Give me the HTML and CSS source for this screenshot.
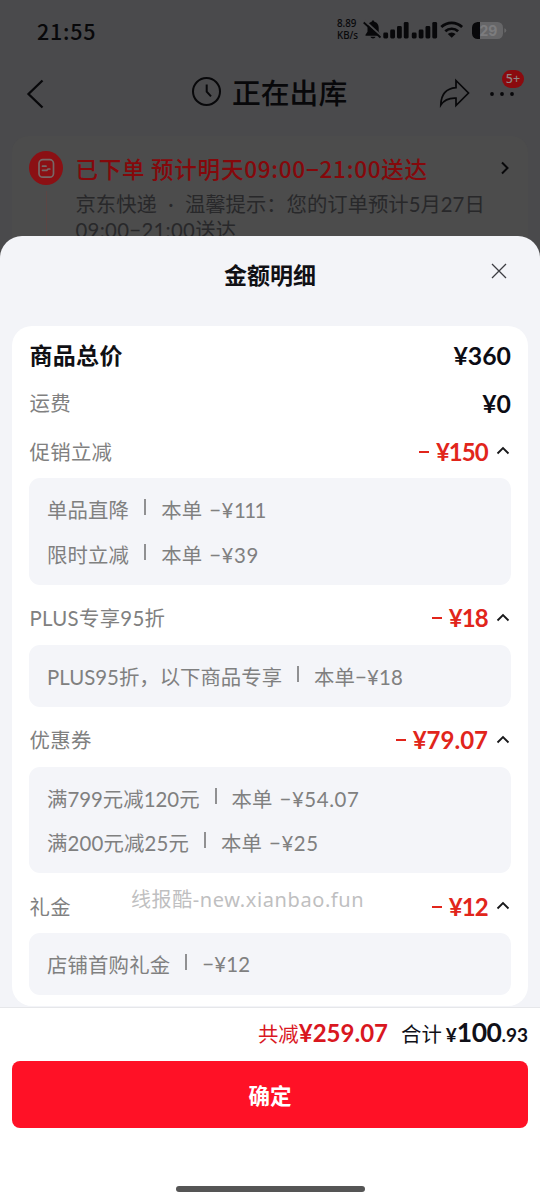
FILE: index.html
```html
<!DOCTYPE html>
<html lang="zh-CN">
<head>
<meta charset="utf-8">
<title>金额明细</title>
<link rel="stylesheet" href="styles.css">
</head>
<body>
<div class="page">
  <div class="backdrop">
    <div class="status">
      <span class="clock">21:55</span>
      <span class="speed"><span>8.89</span><span>KB/s</span></span>
      <svg class="status-icons" width="176" height="24" viewBox="0 0 176 24">
        <path d="M10 2.500c.9 0 1.300.5 1.300 1.200 3.100.8 4.400 3 4.400 6v4l2 3v1H2.500v-1l2-3v-4c0-3 1.400-5.200 4.200-6 0-.7.4-1.200 1.300-1.200zM7.500 18.700h5c-.6 2.300-4.400 2.300-5 0z"/>
        <path d="M1.500 2.500 19 18.500" stroke="#4a4a4c" stroke-width="2"/>
        <path d="M.7 4.500 17.500 19.500" stroke="#08080a" stroke-width="1.700"/>
        <g>
          <rect x="20.300" y="14.500" width="4.800" height="6" rx="1.400"/><rect x="27.200" y="11.500" width="4.800" height="9" rx="1.400"/><rect x="34" y="8" width="4.800" height="12.500" rx="1.400"/><rect x="40.800" y="4" width="4.800" height="16.500" rx="1.400"/>
          <rect x="48.800" y="14.500" width="4.800" height="6" rx="1.400"/><rect x="55.700" y="11.500" width="4.800" height="9" rx="1.400"/><rect x="62.500" y="8" width="4.800" height="12.500" rx="1.400"/><rect x="69.300" y="4" width="4.800" height="16.500" rx="1.400"/>
        </g>
        <g fill="none" stroke="#08080a" stroke-width="2.700"><path d="M78.300 9a15 15 0 0 1 20.800 0"/><path d="M82.300 13.300a9.300 9.300 0 0 1 12.800 0"/></g>
        <path d="M88.700 19.800 84.800 16a5.600 5.600 0 0 1 7.800 0z"/>
        <rect x="109" y="4" width="31" height="17" rx="5.500" fill="#666668"/>
        <path d="M117 4v17h-2.500a5.500 5.500 0 0 1-5.500-5.500v-6A5.500 5.500 0 0 1 114.500 4z"/>
        <path d="M141.300 10.300q2 .5 2 2.200t-2 2.200z" fill="#666668"/>
        <text class="battery" x="116.500" y="17.800">29</text>
      </svg>
    </div>
    <div class="nav">
      <svg class="back" width="20" height="32" viewBox="0 0 20 32"><path d="M17.500 2.500 3.500 16l14 13.500"/></svg>
      <div class="nav-title">
        <svg width="30" height="30" viewBox="0 0 30 30"><circle cx="15.500" cy="14.500" r="13.500"/><path d="M15.700 7.500v7.200l4.300 4.700"/></svg>
        <span>正在出库</span>
      </div>
      <svg class="share" width="32" height="30" viewBox="0 0 32 30"><path d="M17 2.500 29.500 15 17 27.500v-7.400C9.500 19.700 5 22 1.800 27 2 16.700 7.500 10.500 17 9.700z"/></svg>
      <svg class="more" width="28" height="8" viewBox="0 0 28 8"><circle cx="4" cy="4" r="1.900"/><circle cx="14" cy="4" r="1.900"/><circle cx="24" cy="4" r="1.900"/></svg>
      <span class="badge">5+</span>
    </div>
    <div class="order">
      <div class="track">
        <svg width="34" height="34" viewBox="0 0 34 34"><circle cx="17" cy="17" r="17" fill="#8b1014"/><g fill="none" stroke="#776867" stroke-width="1.700" stroke-linecap="round"><rect x="10" y="8.700" width="14.500" height="17.500" rx="3.800"/><path d="M13.500 15.200h3.500M13.500 19.300h4.300l1.300-1.300h1.700"/></g></svg>
        <i class="track-line"></i>
      </div>
      <div class="order-text">
        <div class="order-title">已下单 预计明天09:00−21:00送达</div>
        <div class="order-note">京东快递<span class="dot">·</span>温馨提示：您的订单预计5月27日</div>
        <div class="order-note second">09:00−21:00送达</div>
      </div>
      <svg class="order-arrow" width="10" height="14" viewBox="0 0 10 14"><path d="M2 1.500 7.500 7 2 12.500"/></svg>
    </div>
  </div>

  <div class="sheet">
    <div class="sheet-head">
      <h1>金额明细</h1>
      <svg class="close" width="16" height="16" viewBox="0 0 16 16"><path d="M1 1l14 14M15 1 1 15"/></svg>
    </div>
    <div class="bill">
      <div class="row total"><span class="name">商品总价</span><span class="price">¥360</span></div>
      <div class="row"><span class="name">运费</span><span class="price">¥0</span></div>

      <div class="row group first"><span class="name">促销立减</span><span class="price cut"><i class="minus"></i><span class="narrow">¥150</span></span><svg class="up" width="14" height="9" viewBox="0 0 14 9"><path d="M1.500 7.500 7 2l5.500 5.500"/></svg></div>
      <div class="detail">
        <div class="line"><span>单品直降</span><i class="bar"></i><span>本单 <span class="sum">−¥</span><span class="ones">111</span></span></div>
        <div class="line"><span>限时立减</span><i class="bar"></i><span>本单 <span class="sum">−¥39</span></span></div>
      </div>

      <div class="row group"><span class="name">PLUS专享95折</span><span class="price cut"><i class="minus"></i><span class="narrow">¥18</span></span><svg class="up" width="14" height="9" viewBox="0 0 14 9"><path d="M1.500 7.500 7 2l5.500 5.500"/></svg></div>
      <div class="detail">
        <div class="line"><span class="tight">PLUS95折，以下商品专享</span><i class="bar"></i><span>本单−¥18</span></div>
      </div>

      <div class="row group"><span class="name">优惠券</span><span class="price cut"><i class="minus"></i>¥79.07</span><svg class="up" width="14" height="9" viewBox="0 0 14 9"><path d="M1.500 7.500 7 2l5.500 5.500"/></svg></div>
      <div class="detail">
        <div class="line"><span class="tight">满799元减120元</span><i class="bar"></i><span>本单 <span class="sum">−¥54.07</span></span></div>
        <div class="line"><span>满200元减25元</span><i class="bar"></i><span>本单 <span class="sum">−¥25</span></span></div>
      </div>

      <div class="row group"><span class="name">礼金</span><span class="price cut"><i class="minus"></i><span class="narrow">¥12</span></span><svg class="up" width="14" height="9" viewBox="0 0 14 9"><path d="M1.500 7.500 7 2l5.500 5.500"/></svg></div>
      <div class="detail">
        <div class="line"><span>店铺首购礼金</span><i class="bar"></i><span>−¥12</span></div>
      </div>
    </div>
  </div>

  <div class="footer">
    <div class="summary">
      <span class="saved">共减<b>¥259.07</b></span>
      <span class="payable">合计<b class="yen">¥</b><b class="whole">100</b><b class="cents">.93</b></span>
    </div>
    <button class="confirm">确定</button>
    <i class="home-bar"></i>
  </div>
  <div class="watermark">线报酷-new.xianbao.fun</div>
</div>
</body>
</html>
```
FILE: styles.css
```css
* { box-sizing: border-box; }
body {
  margin: 0;
  background: #4a4a4c;
  font-family: Lato, "Noto Sans CJK SC", sans-serif;
}
.page {
  position: relative;
  display: flex;
  flex-direction: column;
  width: 540px;
  height: 1201px;
  overflow: hidden;
}
svg { display: block; flex: none; }

/* dimmed order page */
.backdrop {
  flex: none;
  height: 260px;
  overflow: hidden;
  color: #08080a;
}
.status {
  display: flex;
  align-items: center;
  height: 62px;
  padding-left: 37px;
}
.clock {
  width: 300px;
  margin-top: -2px;
  font: 500 21.500px "Noto Sans CJK SC", sans-serif;
  letter-spacing: 0.800px;
}
.speed {
  display: flex;
  flex-direction: column;
  width: 26px;
  margin-top: -2px;
  font: 500 9.800px/12.500px "Noto Sans", sans-serif;
}
.status-icons { fill: #08080a; margin-top: -2px; }
.battery { font: 700 14px Inter, sans-serif; fill: #7c7c7e; }
.nav {
  position: relative;
  display: flex;
  align-items: center;
  height: 64px;
  padding-left: 25px;
}
.nav svg { fill: none; stroke: #08080a; stroke-width: 2; }
.nav .back { width: 20px; stroke-width: 2.300; }
.nav-title {
  display: flex;
  align-items: center;
  gap: 11px;
  width: 250px;
  margin-left: 146px;
  font-size: 28.800px;
  font-weight: 500;
  font-family: "Noto Sans CJK SC", sans-serif;
  line-height: 40px;
  margin-top: -4px;
}
.nav-title svg { stroke-width: 2; }
.nav .share { margin: -2px 0 0 -2px; stroke-width: 1.700; }
.nav .more { margin-left: 17px; fill: #08080a; stroke: none; }
.badge {
  position: absolute;
  left: 502px;
  top: 8px;
  width: 22px;
  height: 18px;
  border-radius: 9px;
  background: #8b0a0e;
  color: #8f8584;
  font: 500 12.500px/18px "Noto Sans", sans-serif;
  text-align: center;
}
.order {
  display: flex;
  margin: 10px 12px 0;
  padding: 15px 17px 0;
  height: 124px;
  border-radius: 16px;
  background: #4c4c4c;
}
.track {
  display: flex;
  flex-direction: column;
  align-items: center;
  width: 34px;
}
.track-line { width: 1px; height: 70px; margin-top: 6px; background: #5c4544; }
.order-text { width: 420px; margin-left: 12.500px; white-space: nowrap; }
.order-title {
  font-size: 22.500px;
  font-weight: 500;
  line-height: 34px;
  letter-spacing: 0.760px;
  color: #85080b;
  font-family: "Noto Sans CJK SC", sans-serif;
}
.order-note {
  margin-top: 6px;
  font-size: 20.350px;
  line-height: 26px;
  color: #28282a;
}
.order-note.second { margin-top: 0; letter-spacing: 0.300px; }
.dot { display: inline-block; width: 28px; text-align: center; }
.order-arrow { margin: 10px 0 0 4px; fill: none; stroke: #08080a; stroke-width: 2; }

/* bottom sheet */
.sheet {
  position: relative;
  flex: none;
  height: 771px;
  margin-top: -24px;
  padding: 0 12px;
  border-radius: 22px 22px 0 0;
  background: #f3f4f8;
}
.sheet-head {
  position: relative;
  height: 90px;
  padding-top: 22px;
}
h1 {
  margin: 0;
  color: #101014;
  font-size: 23px;
  line-height: 34px;
  font-weight: 700;
  text-align: center;
}
.close { position: absolute; right: 21px; top: 27px; fill: none; stroke: #3d3d42; stroke-width: 1.300; }
.bill {
  height: 680px;
  padding: 5px 17px 0;
  border-radius: 20px;
  background: #fff;
}
.row {
  display: flex;
  align-items: center;
  height: 48px;
  line-height: 30px;
}
.name { flex: 1; padding-left: 0.500px; font-size: 20.400px; letter-spacing: 0.300px; color: #808080; }
.total .name { font-size: 23px; font-weight: 700; color: #101014; }
.price { padding-top: 1px; font-size: 24.800px; font-weight: 700; color: #0c0c14; }
.group { height: 51px; margin-top: 9px; padding-bottom: 2px; }
.group.first { margin-top: 0; }
.cut { display: flex; align-items: center; padding-top: 0; font-size: 24px; color: #e1251b; }
.narrow { margin-right: 0.400px; letter-spacing: -1px; }
.minus { width: 10px; height: 2px; margin-right: 7px; background: currentColor; }
.up { margin: -2px 1px 0 8px; fill: none; stroke: #18181a; stroke-width: 1.800; }
.detail {
  padding: 9px 18px 8.500px;
  border-radius: 11px;
  background: #f4f5f9;
}
.line {
  display: flex;
  align-items: center;
  height: 44.500px;
  font-size: 20.400px;
  letter-spacing: 0.150px;
  color: #808080;
  white-space: nowrap;
}
.sum { margin-left: 1.500px; letter-spacing: 0.600px; }
.ones { letter-spacing: -1.600px; }
.tight { letter-spacing: 0; }
.bar { width: 2px; height: 16px; margin: -4px 15px 0; background: #909092; }

/* settlement footer */
.footer {
  display: flex;
  flex-direction: column;
  height: 194px;
  padding: 0 12px;
  border-top: 1px solid #e6e7ea;
  background: #fff;
}
.summary {
  display: flex;
  justify-content: flex-end;
  align-items: baseline;
  gap: 13px;
  height: 53px;
  line-height: 49px;
  font-size: 20.400px;
  color: #101018;
}
.saved { color: #d9171f; }
.saved b { font-size: 24px; }
.yen { margin-left: 4px; font-size: 19px; }
.whole { font-size: 26.500px; letter-spacing: -0.500px; }
.cents { font-size: 19px; }
.confirm {
  height: 67px;
  padding: 0;
  border: 0;
  border-radius: 8px;
  background: #ff1126;
  color: #fff;
  font: 700 21.500px/67px "Noto Sans CJK SC", sans-serif;
}
.home-bar {
  align-self: center;
  width: 189px;
  height: 6px;
  margin-top: 58px;
  border-radius: 3px;
  background: #555;
}
.watermark {
  position: absolute;
  left: 131px;
  top: 885px;
  color: #bfbfc1;
  font: 400 20px/30px "Noto Sans", "Noto Sans CJK SC", sans-serif;
  letter-spacing: 0.600px;
  white-space: nowrap;
}
```
